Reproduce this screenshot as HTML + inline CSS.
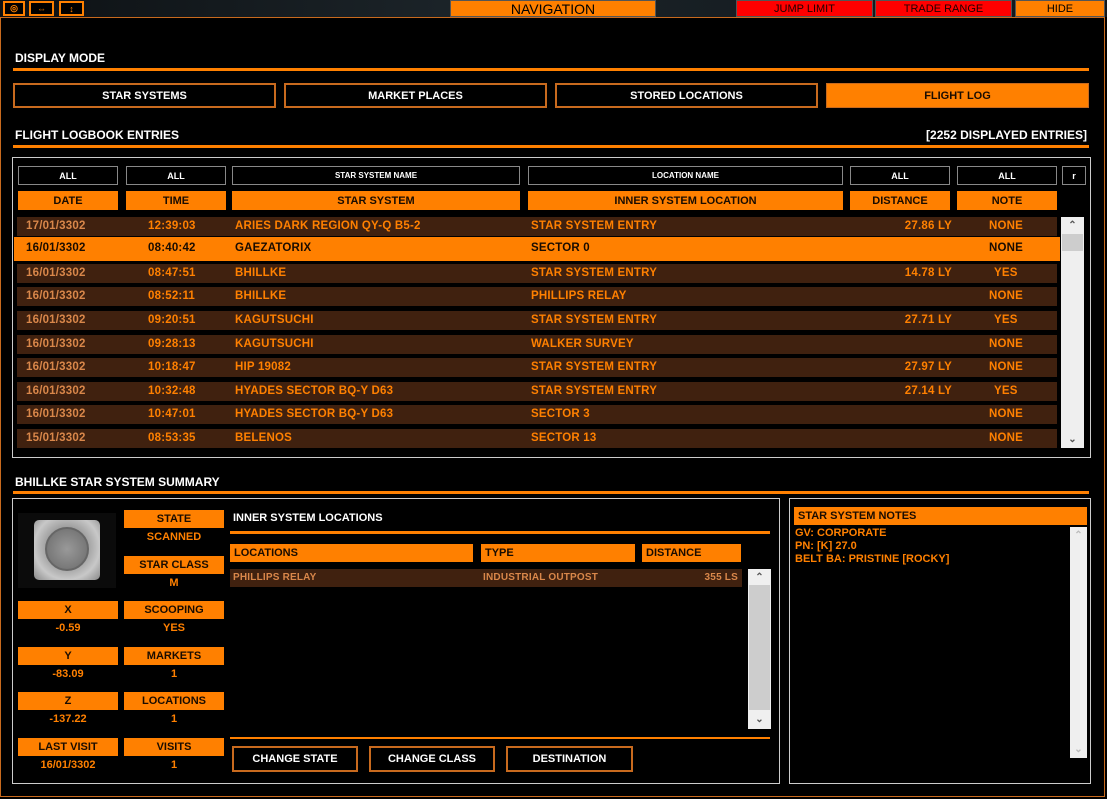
<!DOCTYPE html>
<html><head><meta charset="utf-8"><style>
*{box-sizing:border-box;margin:0;padding:0}
body{width:1107px;height:799px;background:#000;position:relative;overflow:hidden;font-family:"Liberation Sans",sans-serif;font-weight:bold;font-size:11px;color:#ff8000}
.a{position:absolute}
.c{display:flex;align-items:center;justify-content:center;white-space:nowrap}
.ob{background:#ff8000;color:#1a0c00}
.btn{border:2px solid #c86a1e;color:#fff;background:#000}
.flt{border:1px solid #888;color:#fff;background:#000;font-size:9px}
.line{background:#ff8000;height:3px}
.row{background:#40210f;height:19px;font-size:11.5px;letter-spacing:0.2px}
.row span{position:absolute;top:3px}
.t{color:#fff;font-size:12px}
.sb{background:#efefef}
</style></head><body>
<div class="a" style="left:0;top:0;width:1107px;height:17px;background:linear-gradient(90deg,#0d1114,#1b2328 40%,#11181c)"></div>
<div class="a c" style="left:3px;top:1px;width:22px;height:15px;border:2px solid #ff8000;background:#000;color:#ff8000;font-size:9px">◎</div>
<div class="a c" style="left:29px;top:1px;width:25px;height:15px;border:2px solid #ff8000;background:#000;color:#ff8000;font-size:9px">⇔</div>
<div class="a c" style="left:59px;top:1px;width:25px;height:15px;border:2px solid #ff8000;background:#000;color:#ff8000;font-size:9px">↕</div>
<div class="a c ob" style="left:450px;top:0;width:206px;height:17px;font-size:14px;font-weight:normal;border:1px solid #555;color:#000">NAVIGATION</div>
<div class="a c" style="left:736px;top:0;width:137px;height:17px;background:#f00;color:#200;font-weight:normal;border:1px solid #555">JUMP LIMIT</div>
<div class="a c" style="left:875px;top:0;width:137px;height:17px;background:#f00;color:#200;font-weight:normal;border:1px solid #555">TRADE RANGE</div>
<div class="a c ob" style="left:1015px;top:0;width:90px;height:17px;font-weight:normal;border:1px solid #555;color:#000">HIDE</div>
<div class="a" style="left:0;top:17px;width:1105px;height:780px;border:1px solid #c86a1e"></div>

<div class="a t" style="left:15px;top:51px">DISPLAY MODE</div>
<div class="a line" style="left:13px;top:68px;width:1076px"></div>
<div class="a c btn" style="left:13px;top:83px;width:263px;height:25px">STAR SYSTEMS</div>
<div class="a c btn" style="left:284px;top:83px;width:263px;height:25px">MARKET PLACES</div>
<div class="a c btn" style="left:555px;top:83px;width:263px;height:25px">STORED LOCATIONS</div>
<div class="a c ob" style="left:826px;top:83px;width:263px;height:25px;border:1px solid #c86a1e">FLIGHT LOG</div>

<div class="a t" style="left:15px;top:128px">FLIGHT LOGBOOK ENTRIES</div>
<div class="a t" style="right:20px;top:128px">[2252 DISPLAYED ENTRIES]</div>
<div class="a line" style="left:13px;top:145px;width:1076px"></div>
<div class="a" style="left:12px;top:157px;width:1079px;height:301px;border:1px solid #ccc"></div>

<div class="a c flt" style="left:18px;top:166px;width:100px;height:19px">ALL</div>
<div class="a c flt" style="left:126px;top:166px;width:100px;height:19px">ALL</div>
<div class="a c flt" style="left:232px;top:166px;width:288px;height:19px;font-size:8px">STAR SYSTEM NAME</div>
<div class="a c flt" style="left:528px;top:166px;width:315px;height:19px;font-size:8px">LOCATION NAME</div>
<div class="a c flt" style="left:850px;top:166px;width:100px;height:19px">ALL</div>
<div class="a c flt" style="left:957px;top:166px;width:100px;height:19px">ALL</div>
<div class="a c flt" style="left:1062px;top:166px;width:24px;height:19px">r</div>

<div class="a c ob" style="left:18px;top:191px;width:100px;height:19px">DATE</div>
<div class="a c ob" style="left:126px;top:191px;width:100px;height:19px">TIME</div>
<div class="a c ob" style="left:232px;top:191px;width:288px;height:19px">STAR SYSTEM</div>
<div class="a c ob" style="left:528px;top:191px;width:315px;height:19px">INNER SYSTEM LOCATION</div>
<div class="a c ob" style="left:850px;top:191px;width:100px;height:19px">DISTANCE</div>
<div class="a c ob" style="left:957px;top:191px;width:100px;height:19px">NOTE</div>

<div class="a row" style="left:17px;top:217px;width:1040px"><span style="left:9px;color:#d9874a">17/01/3302</span><span style="left:131px">12:39:03</span><span style="left:218px">ARIES DARK REGION QY-Q B5-2</span><span style="left:514px">STAR SYSTEM ENTRY</span><span style="right:105px">27.86 LY</span><span style="left:972px">NONE</span></div>
<div class="a row" style="left:14px;top:237px;width:1046px;height:24px;background:#ff8000;color:#1a0c00"><span style="left:12px;top:5px">16/01/3302</span><span style="left:134px;top:5px">08:40:42</span><span style="left:221px;top:5px">GAEZATORIX</span><span style="left:517px;top:5px">SECTOR 0</span><span style="left:975px;top:5px">NONE</span></div>
<div class="a row" style="left:17px;top:264px;width:1040px"><span style="left:9px;color:#d9874a">16/01/3302</span><span style="left:131px">08:47:51</span><span style="left:218px">BHILLKE</span><span style="left:514px">STAR SYSTEM ENTRY</span><span style="right:105px">14.78 LY</span><span style="left:977px">YES</span></div>
<div class="a row" style="left:17px;top:287px;width:1040px"><span style="left:9px;color:#d9874a">16/01/3302</span><span style="left:131px">08:52:11</span><span style="left:218px">BHILLKE</span><span style="left:514px">PHILLIPS RELAY</span><span style="left:972px">NONE</span></div>
<div class="a row" style="left:17px;top:311px;width:1040px"><span style="left:9px;color:#d9874a">16/01/3302</span><span style="left:131px">09:20:51</span><span style="left:218px">KAGUTSUCHI</span><span style="left:514px">STAR SYSTEM ENTRY</span><span style="right:105px">27.71 LY</span><span style="left:977px">YES</span></div>
<div class="a row" style="left:17px;top:335px;width:1040px"><span style="left:9px;color:#d9874a">16/01/3302</span><span style="left:131px">09:28:13</span><span style="left:218px">KAGUTSUCHI</span><span style="left:514px">WALKER SURVEY</span><span style="left:972px">NONE</span></div>
<div class="a row" style="left:17px;top:358px;width:1040px"><span style="left:9px;color:#d9874a">16/01/3302</span><span style="left:131px">10:18:47</span><span style="left:218px">HIP 19082</span><span style="left:514px">STAR SYSTEM ENTRY</span><span style="right:105px">27.97 LY</span><span style="left:972px">NONE</span></div>
<div class="a row" style="left:17px;top:382px;width:1040px"><span style="left:9px;color:#d9874a">16/01/3302</span><span style="left:131px">10:32:48</span><span style="left:218px">HYADES SECTOR BQ-Y D63</span><span style="left:514px">STAR SYSTEM ENTRY</span><span style="right:105px">27.14 LY</span><span style="left:977px">YES</span></div>
<div class="a row" style="left:17px;top:405px;width:1040px"><span style="left:9px;color:#d9874a">16/01/3302</span><span style="left:131px">10:47:01</span><span style="left:218px">HYADES SECTOR BQ-Y D63</span><span style="left:514px">SECTOR 3</span><span style="left:972px">NONE</span></div>
<div class="a row" style="left:17px;top:429px;width:1040px"><span style="left:9px;color:#d9874a">15/01/3302</span><span style="left:131px">08:53:35</span><span style="left:218px">BELENOS</span><span style="left:514px">SECTOR 13</span><span style="left:972px">NONE</span></div>

<div class="a sb" style="left:1061px;top:217px;width:23px;height:231px"></div>
<div class="a" style="left:1062px;top:234px;width:21px;height:17px;background:#cdcdcd"></div>
<div class="a c" style="left:1061px;top:218px;width:23px;height:14px;color:#555;font-size:10px">⌃</div>
<div class="a c" style="left:1061px;top:432px;width:23px;height:14px;color:#555;font-size:10px">⌄</div>

<div class="a t" style="left:15px;top:475px">BHILLKE STAR SYSTEM SUMMARY</div>
<div class="a line" style="left:13px;top:491px;width:1076px"></div>
<div class="a" style="left:12px;top:498px;width:768px;height:286px;border:1px solid #ccc"></div>
<div class="a" style="left:789px;top:498px;width:302px;height:286px;border:1px solid #ccc"></div>

<div class="a" style="left:18px;top:513px;width:98px;height:75px;background:#0b0b0b"></div>
<div class="a" style="left:34px;top:520px;width:66px;height:60px;border-radius:5px;background:radial-gradient(circle at 50% 45%,#7a7a7a,#9a9a9a 40%,#c8c8c8 70%,#888)"></div>
<div class="a" style="left:45px;top:527px;width:44px;height:44px;border-radius:50%;border:2px solid #666;background:radial-gradient(#999,#6a6a6a)"></div>

<div class="a c ob" style="left:124px;top:510px;width:100px;height:18px;font-size:11px">STATE</div>
<div class="a c" style="left:124px;top:530px;width:100px;height:14px">SCANNED</div>
<div class="a c ob" style="left:124px;top:556px;width:100px;height:18px">STAR CLASS</div>
<div class="a c" style="left:124px;top:576px;width:100px;height:14px">M</div>
<div class="a c ob" style="left:18px;top:601px;width:100px;height:18px">X</div>
<div class="a c" style="left:18px;top:621px;width:100px;height:14px">-0.59</div>
<div class="a c ob" style="left:124px;top:601px;width:100px;height:18px">SCOOPING</div>
<div class="a c" style="left:124px;top:621px;width:100px;height:14px">YES</div>
<div class="a c ob" style="left:18px;top:647px;width:100px;height:18px">Y</div>
<div class="a c" style="left:18px;top:667px;width:100px;height:14px">-83.09</div>
<div class="a c ob" style="left:124px;top:647px;width:100px;height:18px">MARKETS</div>
<div class="a c" style="left:124px;top:667px;width:100px;height:14px">1</div>
<div class="a c ob" style="left:18px;top:692px;width:100px;height:18px">Z</div>
<div class="a c" style="left:18px;top:712px;width:100px;height:14px">-137.22</div>
<div class="a c ob" style="left:124px;top:692px;width:100px;height:18px">LOCATIONS</div>
<div class="a c" style="left:124px;top:712px;width:100px;height:14px">1</div>
<div class="a c ob" style="left:18px;top:738px;width:100px;height:18px">LAST VISIT</div>
<div class="a c" style="left:18px;top:758px;width:100px;height:14px">16/01/3302</div>
<div class="a c ob" style="left:124px;top:738px;width:100px;height:18px">VISITS</div>
<div class="a c" style="left:124px;top:758px;width:100px;height:14px">1</div>

<div class="a" style="left:233px;top:512px;color:#fff">INNER SYSTEM LOCATIONS</div>
<div class="a line" style="left:230px;top:531px;width:540px"></div>
<div class="a ob" style="left:230px;top:544px;width:243px;height:18px;padding:3px 4px">LOCATIONS</div>
<div class="a ob" style="left:481px;top:544px;width:154px;height:18px;padding:3px 4px">TYPE</div>
<div class="a ob" style="left:642px;top:544px;width:99px;height:18px;padding:3px 4px">DISTANCE</div>
<div class="a row" style="left:230px;top:569px;width:512px;height:18px;font-size:10px"><span style="left:3px;color:#d9874a">PHILLIPS RELAY</span><span style="left:253px;color:#d9874a">INDUSTRIAL OUTPOST</span><span style="right:4px;color:#d9874a">355 LS</span></div>
<div class="a sb" style="left:748px;top:569px;width:23px;height:160px"></div>
<div class="a" style="left:749px;top:585px;width:21px;height:125px;background:#cdcdcd"></div>
<div class="a c" style="left:748px;top:571px;width:23px;height:12px;color:#555;font-size:10px">⌃</div>
<div class="a c" style="left:748px;top:713px;width:23px;height:12px;color:#555;font-size:10px">⌄</div>
<div class="a" style="left:230px;top:737px;width:540px;height:2px;background:#ff8000"></div>
<div class="a c btn" style="left:232px;top:746px;width:126px;height:26px;font-size:11px">CHANGE STATE</div>
<div class="a c btn" style="left:369px;top:746px;width:126px;height:26px">CHANGE CLASS</div>
<div class="a c btn" style="left:506px;top:746px;width:127px;height:26px">DESTINATION</div>

<div class="a ob" style="left:794px;top:507px;width:293px;height:18px;padding:3px 4px">STAR SYSTEM NOTES</div>
<div class="a" style="left:795px;top:527px;line-height:13px;font-size:11px">GV: CORPORATE<br>PN: [K] 27.0<br>BELT BA: PRISTINE [ROCKY]</div>
<div class="a sb" style="left:1070px;top:527px;width:17px;height:231px"></div>
<div class="a c" style="left:1070px;top:529px;width:17px;height:12px;color:#bbb;font-size:10px">⌃</div>
<div class="a c" style="left:1070px;top:743px;width:17px;height:12px;color:#bbb;font-size:10px">⌄</div>
</body></html>
